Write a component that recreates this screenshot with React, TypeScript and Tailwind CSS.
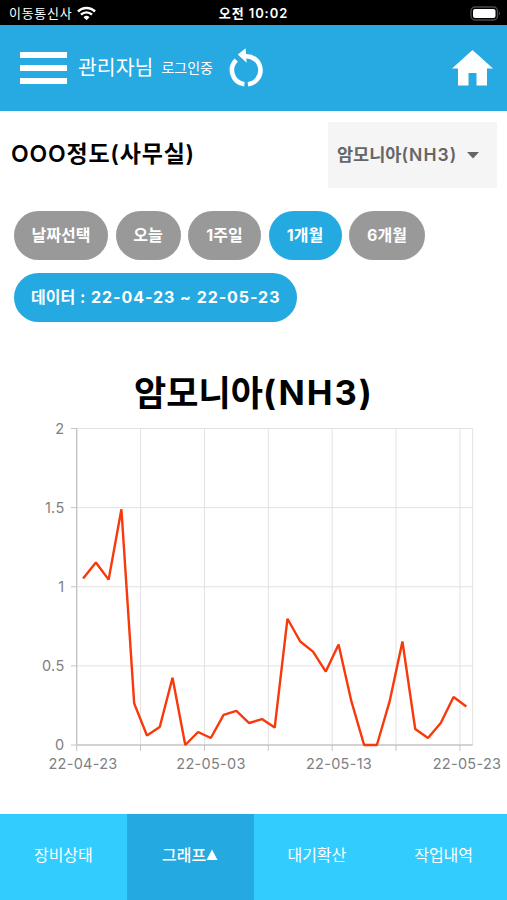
import { useState, type JSX } from "react";
import clsx from "clsx";

const PERIODS = [
  { label: "날짜선택", width: "w-[94px]" },
  { label: "오늘", width: "w-[65px]" },
  { label: "1주일", width: "w-[73px]" },
  { label: "1개월", width: "w-[73px]" },
  { label: "6개월", width: "w-[76px]" },
];

const TABS = ["장비상태", "그래프", "대기확산", "작업내역"];

const VALUES = [
  1.052, 1.153, 1.045, 1.49, 0.263, 0.06, 0.114, 0.425, 0, 0.082, 0.044, 0.19,
  0.215, 0.139, 0.164, 0.11, 0.798, 0.654, 0.59, 0.464, 0.635, 0.277, 0, 0,
  0.277, 0.654, 0.101, 0.044, 0.139, 0.303, 0.243,
];

const LEFT = 76.7;
const RIGHT = 472.7;
const TOP = 8.5;
const BOTTOM = 325;
const STEP = (RIGHT - LEFT) / VALUES.length;

function StatusBar(): JSX.Element {
  return (
    <div className="grid h-[25px] grid-cols-3 items-center bg-black pt-[2px] text-[13px] leading-none text-white">
      <div className="flex items-center gap-[5px] pl-[9px]">
        <span className="tracking-[0.7px]">이동통신사</span>
        <svg width="19" height="15" viewBox="0 0 19 15" fill="none" stroke="white">
          <path d="M1 5.5a12 12 0 0 1 17 0" strokeWidth="2.6" />
          <path d="M4 8.6a7.8 7.8 0 0 1 11 0" strokeWidth="2.4" />
          <path d="M6.5 11.2a4.3 4.3 0 0 1 6 0l-3 3z" fill="white" stroke="none" />
        </svg>
      </div>
      <div className="text-center font-semibold tracking-[0.9px] whitespace-nowrap">오전 10:02</div>
      <div className="flex justify-end pr-[6px]">
        <svg width="31" height="15" viewBox="0 0 31 15">
          <rect x="1" y="1" width="26.5" height="13" rx="4" fill="none" stroke="#4a4a4a" strokeWidth="1.4" />
          <rect x="3" y="3" width="22.5" height="9" rx="2" fill="white" />
          <path d="M29 5.5q2 2 0 4z" fill="#4a4a4a" />
        </svg>
      </div>
    </div>
  );
}

function Header(): JSX.Element {
  return (
    <header className="flex h-[85.5px] items-center bg-[#27aae2] pr-[14px] pl-[20px] text-white">
      <button type="button" aria-label="메뉴" className="flex w-[47px] flex-col gap-[7px]">
        <span className="h-[6px] bg-white" />
        <span className="h-[6px] bg-white" />
        <span className="h-[6px] bg-white" />
      </button>
      <span className="ml-[11px] text-[20.5px] leading-none">관리자님</span>
      <span className="ml-[8px] text-[14px] leading-none">로그인중</span>
      <svg className="ml-[16px]" width="35" height="40" viewBox="0 0 35 40" fill="none">
        <path d="M15.4 36.2A14 14 0 0 1 7.3 12.2" stroke="white" strokeWidth="4.6" />
        <path d="M18.9 36.2A14 14 0 0 0 16 8.3" stroke="white" strokeWidth="4.6" />
        <path d="M8.8 6.5L16.6 0.2L17.6 14.8z" fill="white" />
      </svg>
      <svg className="ml-auto" width="41" height="36" viewBox="0 0 41 36" fill="white">
        <path d="M20.5 0L41 18.5h-6V35.5H24.5V23h-8v12.5H6v-17H0z" />
      </svg>
    </header>
  );
}

function Chart(): JSX.Element {
  const y = (v: number) => BOTTOM - (v / 2) * (BOTTOM - TOP);
  const x = (i: number) => LEFT + i * STEP;
  const points = VALUES.map((v, i) => `${x(i + 0.5)},${y(v)}`).join(" ");

  return (
    <svg width="507" height="360" viewBox="0 0 507 360" fill="none" className="block">
      {[0.5, 1, 1.5, 2].map((v) => (
        <path key={v} d={`M${LEFT} ${y(v)}H${RIGHT}`} stroke="#e2e2e2" />
      ))}
      {[5, 10, 15, 20, 25, 30, 31].map((i) => (
        <path key={i} d={`M${x(i)} ${TOP}V${BOTTOM}`} stroke="#e2e2e2" />
      ))}
      {[0, 0.5, 1, 1.5, 2].map((v) => (
        <path key={v} d={`M71 ${y(v)}H${LEFT}`} stroke="#c4c4c4" />
      ))}
      {[0, 5, 10, 15, 20, 25, 30].map((i) => (
        <path key={i} d={`M${x(i)} ${BOTTOM}v6`} stroke="#c4c4c4" />
      ))}
      <path d={`M${LEFT} ${TOP}V${BOTTOM}H${RIGHT}`} stroke="#c4c4c4" strokeWidth="1.4" />
      <polyline points={points} stroke="#f7390c" strokeWidth="2.4" strokeLinejoin="bevel" />
      <g fill="#808080" fontSize="14.5" letterSpacing="0.3">
        {[0, 0.5, 1, 1.5, 2].map((v) => (
          <text key={v} x="64.5" y={y(v) + 5} textAnchor="end">
            {v}
          </text>
        ))}
        {["22-04-23", "22-05-03", "22-05-13", "22-05-23"].map((date, i) => (
          <text key={date} x={83 + i * 128} y="348.5" textAnchor="middle">
            {date}
          </text>
        ))}
      </g>
    </svg>
  );
}

export default function App(): JSX.Element {
  const [period, setPeriod] = useState("1개월");
  const [tab, setTab] = useState("그래프");

  return (
    <div className="flex h-[900px] w-[507px] flex-col overflow-hidden bg-white font-[Inter,'Noto_Sans_CJK_KR',sans-serif]">
      <StatusBar />
      <Header />

      <div className="mt-[11.5px] flex h-[66px] items-center justify-between pr-[10px] pl-[11px]">
        <h1 className="pb-[1px] text-[23px] leading-none font-semibold tracking-[0.8px] whitespace-nowrap">
          OOO정도(사무실)
        </h1>
        <button
          type="button"
          className="flex h-full w-[169px] items-center gap-[10px] bg-[#f5f5f5] pl-[9px] text-[17.5px] leading-none font-semibold text-[#666]"
        >
          <span className="whitespace-nowrap">
            암모니아<span className="tracking-[1.1px]">(NH3)</span>
          </span>
          <svg width="12" height="7" viewBox="0 0 12 7" fill="#666">
            <path d="M0 0h12L6 6.5z" />
          </svg>
        </button>
      </div>

      {/* Period filter */}
      <div className="mt-[23px] flex gap-[7.5px] pl-[14px]">
        {PERIODS.map(({ label, width }) => (
          <button
            key={label}
            type="button"
            onClick={() => setPeriod(label)}
            className={clsx(
              "h-[49px] rounded-full pb-[2px] text-[16px] leading-none font-bold whitespace-nowrap text-white",
              width,
              period === label ? "bg-[#25a9e1]" : "bg-[#999]"
            )}
          >
            {label}
          </button>
        ))}
      </div>
      <div className="mt-[13px] ml-[14px] flex h-[49px] w-[283px] items-center rounded-full bg-[#25a9e1] pb-[2px] pl-[17px] text-[16px] leading-none font-bold whitespace-pre text-white">
        데이터<span className="tracking-[0.95px]"> : 22-04-23 ~ 22-05-23</span>
      </div>

      <h2 className="mt-[45px] mb-[1px] flex h-[52px] items-center justify-center pl-[1px] text-[35px] leading-none font-bold">
        암모니아<span className="text-[34.5px] tracking-[2px]">(NH3)</span>
      </h2>
      <Chart />

      <nav className="mt-auto grid h-[86px] shrink-0 grid-cols-4 bg-[#33ccff]">
        {TABS.map((label) => (
          <button
            key={label}
            type="button"
            onClick={() => setTab(label)}
            className={clsx(
              "flex items-center justify-center pb-[4px] text-[16px] leading-none text-white",
              tab === label && "bg-[#25a9e1] font-medium"
            )}
          >
            {label}
            {tab === label && (
              <svg width="12" height="12" viewBox="0 0 12 12" fill="white">
                <path d="M6 .5L11.5 11H.5z" />
              </svg>
            )}
          </button>
        ))}
      </nav>
    </div>
  );
}
